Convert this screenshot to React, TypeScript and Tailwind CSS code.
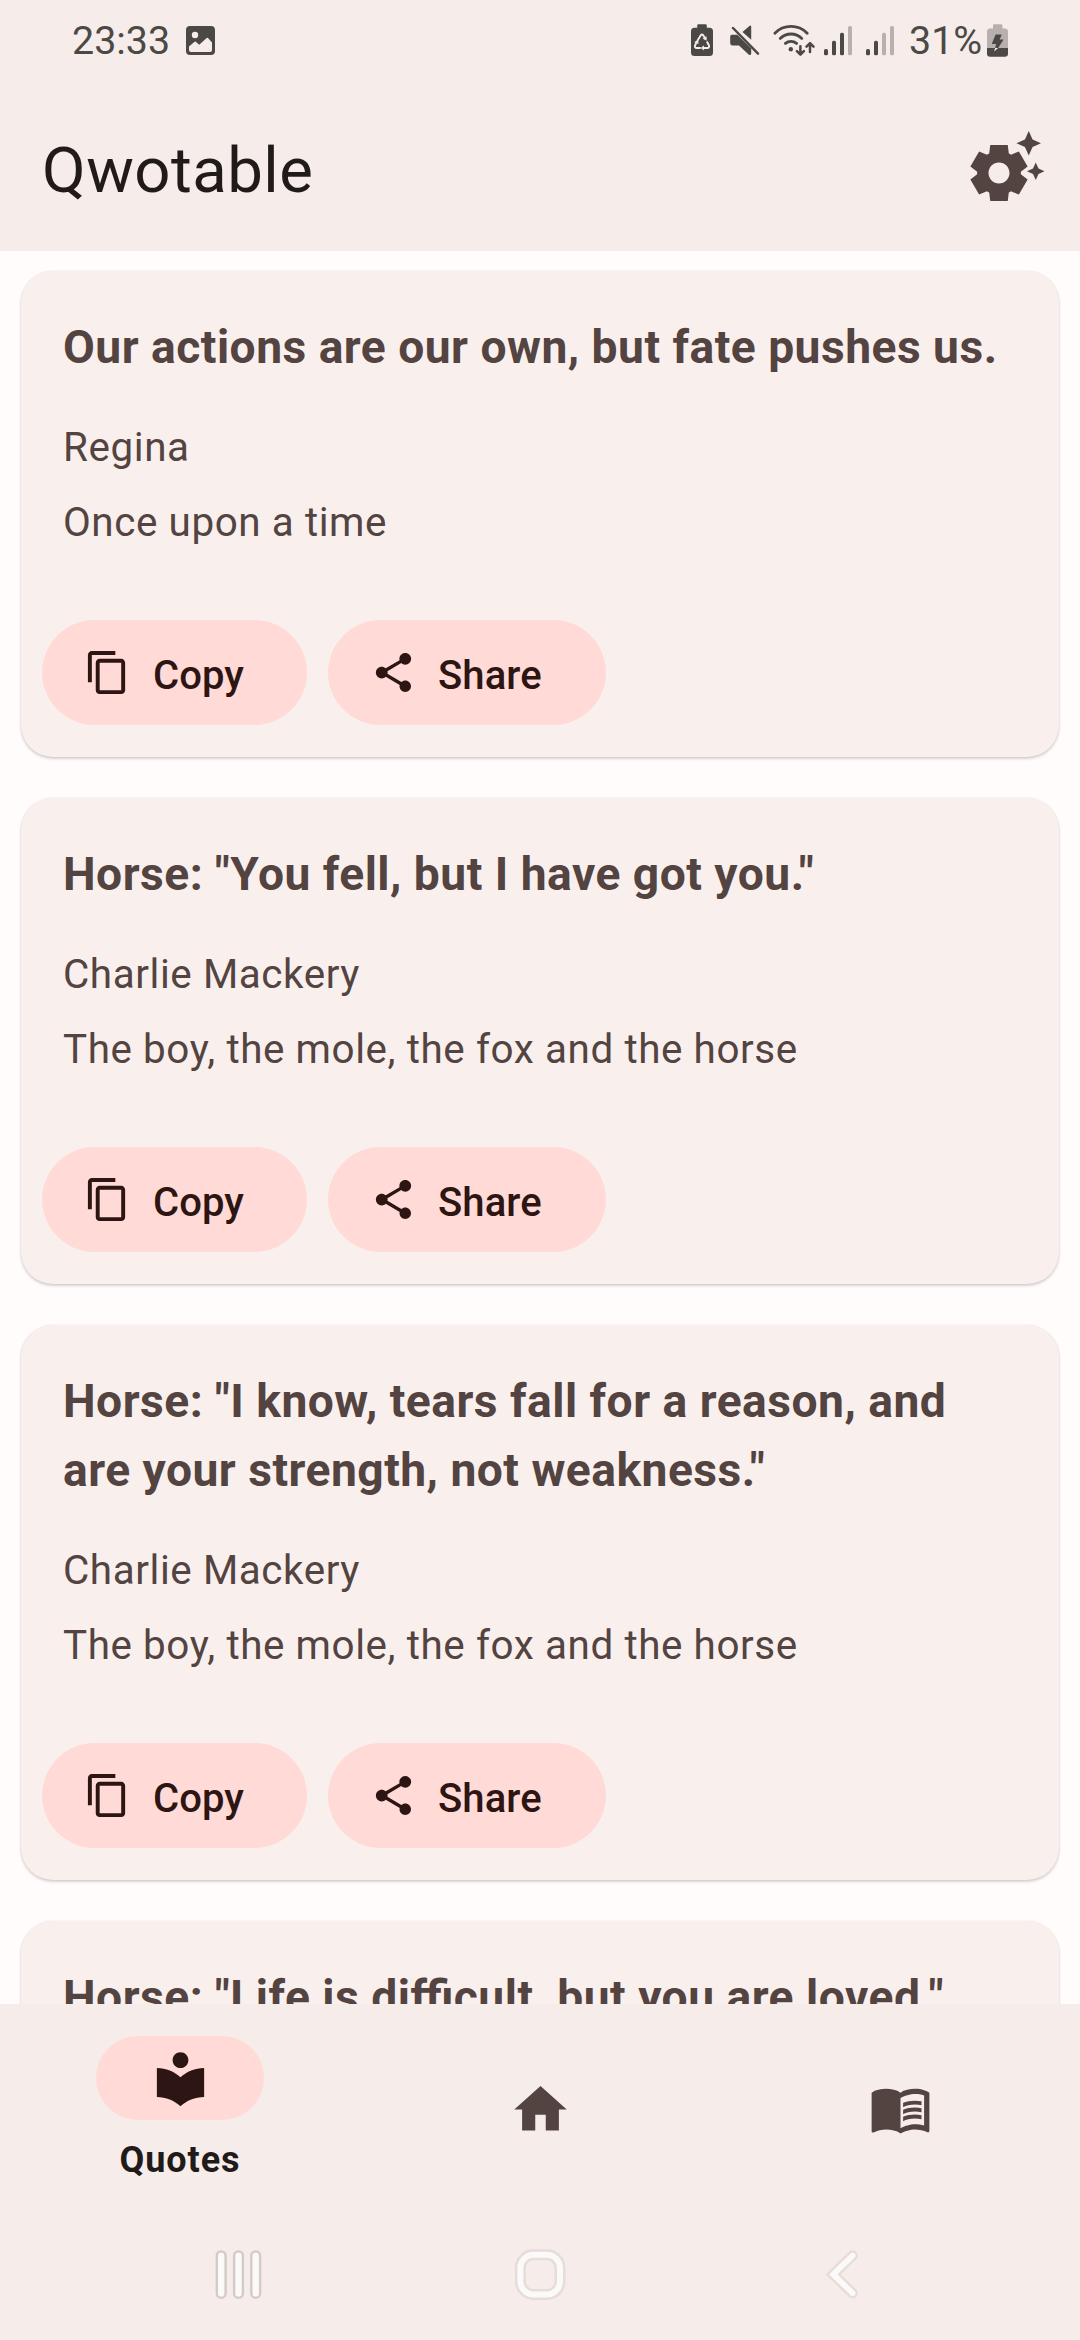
import {
  MdContentCopy,
  MdHome,
  MdLocalLibrary,
  MdMenuBook,
  MdSettingsSuggest,
  MdShare,
} from "react-icons/md";

type Quote = { text: string; author?: string; source?: string };

const quotes: Quote[] = [
  {
    text: "Our actions are our own, but fate pushes us.",
    author: "Regina",
    source: "Once upon a time",
  },
  {
    text: 'Horse: "You fell, but I have got you."',
    author: "Charlie Mackery",
    source: "The boy, the mole, the fox and the horse",
  },
  {
    text: 'Horse: "I know, tears fall for a reason, and are your strength, not weakness."',
    author: "Charlie Mackery",
    source: "The boy, the mole, the fox and the horse",
  },
  {
    text: 'Horse: "Life is difficult, but you are loved."',
  },
];

function PictureIcon() {
  return (
    <svg className="h-[29px] w-[29px]" viewBox="0 0 29 29">
      <rect width="29" height="29" rx="4" fill="#4a4945" />
      <circle cx="9" cy="9" r="3.2" fill="#f6ece9" />
      <path
        d="M3 20.5L8.6 15.8Q9.3 15.3 10 15.9L13.2 18.8L20.4 12.2Q21.3 11.5 22.2 12.3L26 16.5V24Q26 26 24 26H5Q3 26 3 24Z"
        fill="#f6ece9"
      />
    </svg>
  );
}

function BatterySaverIcon() {
  return (
    <svg className="h-[33px] w-[22px]" viewBox="0 0 22 33">
      <path
        d="M6.2 1.5Q6.2.3 7.4.3H14.6Q15.8.3 15.8 1.5V3.8H18.5Q22 3.8 22 7.3V28.5Q22 32 18.5 32H3.5Q0 32 0 28.5V7.3Q0 3.8 3.5 3.8H6.2Z"
        fill="#4a4945"
      />
      <g fill="none" stroke="#f6ece9" strokeWidth="1.9" strokeLinejoin="round">
        <path d="M6.4 16.8L9.6 11.5Q11 9.5 12.4 11.5L14.5 15" />
        <path d="M15.9 17.5L18 21.5Q18.6 24 16.2 24H12.5" />
        <path d="M9.8 24H5.8Q3.4 24 4 21.5L5.3 19" />
      </g>
      <path
        d="M3.2 18.3L7 15.6L7.6 20ZM15.6 12.2L15.6 16.8L11.6 14.6ZM12.9 21.2V26.4L9.8 23.9Z"
        fill="#f6ece9"
      />
    </svg>
  );
}

function MuteIcon() {
  return (
    <svg className="h-[33px] w-[30px]" viewBox="730 25 30 33">
      <path
        d="M742.5 33L749.4 27Q751.2 25.8 751.2 28V40.8ZM731.8 35.8H737.3L751.2 49.4V54.5Q750.8 57 748.6 55.5L739 46.6H732.5Q730.2 46.6 730.2 44.3V37.5Q730.2 35.8 731.8 35.8Z"
        fill="#4a4945"
      />
      <path d="M734 27.9L759 53.5" stroke="#f6ece9" strokeWidth="3" />
      <path
        d="M733 29L758 54.6"
        stroke="#4a4945"
        strokeWidth="2.5"
        strokeLinecap="round"
      />
    </svg>
  );
}

function WifiIcon() {
  return (
    <svg className="h-[33px] w-[42px]" viewBox="773 25 42 33">
      <g
        fill="none"
        stroke="#4a4945"
        strokeWidth="2.8"
        strokeLinecap="round"
        strokeLinejoin="round"
      >
        <path d="M774.9 34.2Q781.5 27.4 791 27.4T807.2 34.2" />
        <path d="M780.2 39.4Q784.8 35 791 35T801.8 39.4" />
        <path d="M785.4 44.4Q787.9 42.3 791 42.3T796.6 44.4" />
      </g>
      <g
        fill="none"
        stroke="#4a4945"
        strokeWidth="2.5"
        strokeLinecap="round"
        strokeLinejoin="round"
      >
        <path d="M800.4 47.2V55.4M796.9 52.2L800.4 55.7L803.9 52.2" />
        <path d="M810 53V44.4M806.5 47.6L810 44.1L813.5 47.6" />
      </g>
      <circle cx="790.8" cy="50.2" r="2.2" fill="#4a4945" />
    </svg>
  );
}

function SignalIcon({ level }: { level: number }) {
  return (
    <svg className="h-[33px] w-[28px]" viewBox="0 25 28 33">
      {[50, 41.7, 33.7, 27].map((y, i) => (
        <rect
          key={y}
          x={i * 8}
          y={y}
          width="4"
          height={56.3 - y}
          rx="1.6"
          fill={i < level ? "#4a4945" : "#b9b0ae"}
        />
      ))}
    </svg>
  );
}

function ChargingIcon() {
  return (
    <svg className="h-[33px] w-[21px]" viewBox="987 25 21 33">
      <path
        d="M993 26.4Q993 25.2 994.2 25.2H1001.2Q1002.4 25.2 1002.4 26.4V29.5H1004.8Q1008 29.5 1008 32.7V49H987V32.7Q987 29.5 990.2 29.5H993Z"
        fill="#b9b0ae"
      />
      <path
        d="M987 49H1008V54.5Q1008 57.8 1004.8 57.8H990.2Q987 57.8 987 54.5Z"
        fill="#4a4945"
      />
      <path
        d="M995.6 35.5H1001.8L999.6 40.5H1003.6L998.2 49H995.2L996.1 44.9H991.7Z"
        fill="#4a4945"
      />
      <path d="M995.2 49H998.2L994 52.6Z" fill="#f6ece9" />
    </svg>
  );
}

function StatusBar() {
  return (
    <div className="flex h-[81px] items-center px-[72px] text-[39.4px] leading-[46px] text-[#4a4945]">
      <span>23:33</span>
      <span className="ml-[16px]">
        <PictureIcon />
      </span>
      <div className="ml-auto flex items-center">
        <BatterySaverIcon />
        <span className="ml-[17px]">
          <MuteIcon />
        </span>
        <span className="ml-[13px]">
          <WifiIcon />
        </span>
        <span className="ml-[9px]">
          <SignalIcon level={3} />
        </span>
        <span className="ml-[14px]">
          <SignalIcon level={2} />
        </span>
        <span className="ml-[15px] w-[78px]">31%</span>
        <ChargingIcon />
      </div>
    </div>
  );
}

function QuoteCard({ quote }: { quote: Quote }) {
  return (
    <article className="shrink-0 rounded-[32px] bg-[#f9f0ee] px-[21px] pt-[42px] pb-[32px] text-[#534341] shadow-[0_2px_3px_rgba(0,0,0,0.16),0_0_2px_rgba(0,0,0,0.10)]">
      <h2 className="px-[21px] text-[46.2px] leading-[69px] font-bold tracking-[0.48px] [font-feature-settings:'liga'_1]">
        {quote.text}
      </h2>
      {quote.author && (
        <>
          <div className="mt-[28px] px-[21px] text-[40.4px] leading-[75px] tracking-[0.58px]">
            <p>{quote.author}</p>
            <p>{quote.source}</p>
          </div>
          <div className="mt-[60px] flex gap-[21px] text-[40px] leading-[58px] font-medium tracking-[0.1px] text-[#2c1512]">
            <button className="flex h-[105px] w-[265px] items-center rounded-full bg-[#ffdad6] pl-[42px]">
              <MdContentCopy className="size-[47px]" />
              <span className="mt-[6px] ml-[22px]">Copy</span>
            </button>
            <button className="flex h-[105px] w-[278px] items-center rounded-full bg-[#ffdad6] pl-[42px]">
              <MdShare className="size-[47px]" />
              <span className="mt-[6px] ml-[21px]">Share</span>
            </button>
          </div>
        </>
      )}
    </article>
  );
}

function BottomBar() {
  return (
    <nav className="grid h-[210px] shrink-0 grid-cols-3 text-[#534341]">
      <div className="flex flex-col items-center pt-[32px]">
        <div className="flex h-[84px] w-[168px] items-center justify-center rounded-full bg-[#ffdad6]">
          <MdLocalLibrary className="size-[63px] text-[#2c1512]" />
        </div>
        <span className="mt-[17px] text-[36px] leading-[46px] font-bold tracking-[0.95px] text-[#201a19]">
          Quotes
        </span>
      </div>
      <div className="flex items-center justify-center">
        <MdHome className="size-[63px]" />
      </div>
      <div className="flex items-center justify-center pb-[1px]">
        <MdMenuBook className="size-[63px]" />
      </div>
    </nav>
  );
}

function SystemBar() {
  return (
    <div className="flex h-[126px] shrink-0 items-start pt-[35px] pl-[213px]">
      <svg className="h-[52px] w-[51px]" viewBox="213 2249 51 52">
        {[221.2, 238.5, 255.7].map((x) => (
          <rect
            key={x}
            x={x - 4.4}
            y="2251.4"
            width="8.8"
            height="46.4"
            rx="4.4"
            fill="#fbfaf9"
            stroke="#d4cac8"
            strokeWidth="2.4"
          />
        ))}
      </svg>
      <svg className="ml-[249px] h-[52px] w-[54px]" viewBox="513 2249 54 52">
        <g fill="none">
          <rect x="520.4" y="2254.8" width="39.6" height="39.6" rx="13" stroke="#e6dcd9" strokeWidth="11" />
          <rect x="520.4" y="2254.8" width="39.6" height="39.6" rx="13" stroke="#fbfaf9" strokeWidth="6" />
        </g>
      </svg>
      <svg className="ml-[257px] h-[52px] w-[38px]" viewBox="824 2249 38 52">
        <g fill="none" strokeLinecap="round" strokeLinejoin="miter">
          <path d="M852.6 2255.6L833.2 2274.4L852.6 2293.2" stroke="#e6dcd9" strokeWidth="10.5" />
          <path d="M852.6 2255.6L833.2 2274.4L852.6 2293.2" stroke="#fbfaf9" strokeWidth="5.8" />
        </g>
      </svg>
    </div>
  );
}

export default function App() {
  return (
    <div className="flex h-[2340px] w-[1080px] flex-col overflow-hidden bg-[#f6ece9] font-[Roboto,sans-serif]">
      <header className="h-[251px] shrink-0">
        <StatusBar />
        <div className="flex h-[170px] items-center justify-between pr-[32px] pl-[42px]">
          <h1 className="mt-[9px] text-[63.5px] leading-[80px] tracking-[0.45px] text-[#201a19]">
            Qwotable
          </h1>
          <MdSettingsSuggest className="size-[84px] text-[#534341]" />
        </div>
      </header>
      <main className="flex min-h-0 flex-1 flex-col gap-[41px] overflow-hidden bg-[#fffcfb] px-[21px] pt-[20px]">
        {quotes.map((quote) => (
          <QuoteCard key={quote.text} quote={quote} />
        ))}
      </main>
      <BottomBar />
      <SystemBar />
    </div>
  );
}
